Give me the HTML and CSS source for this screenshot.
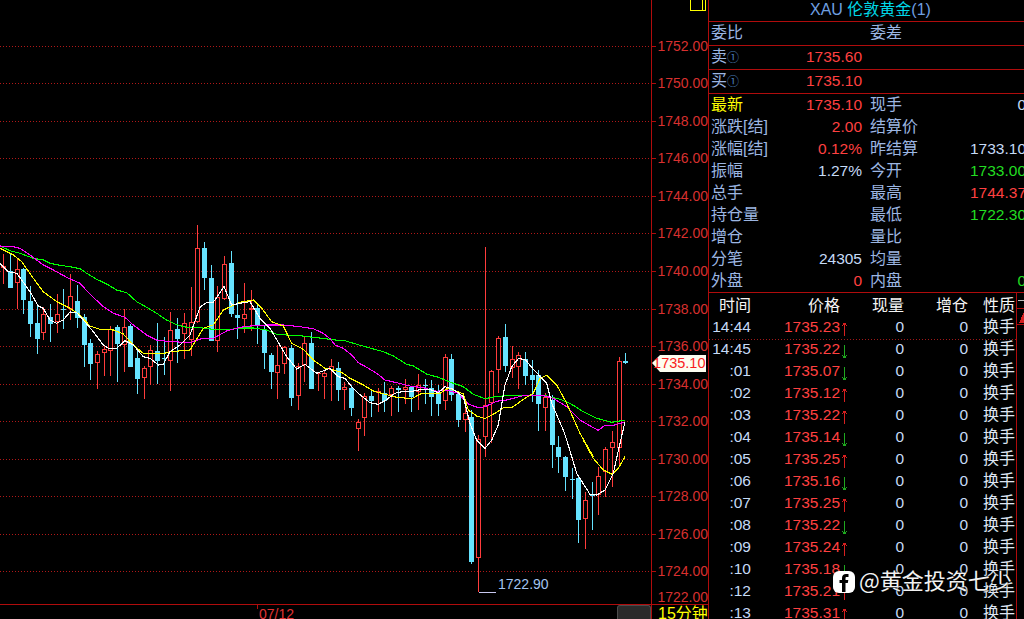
FILE: index.html
```html
<!DOCTYPE html>
<html lang="zh-CN">
<head>
    <meta charset="UTF-8">
    <title>XAU 伦敦黄金</title>
    <link rel="stylesheet" href="styles.css">
</head>
<body>
    <svg class="sprites" width="0" height="0">
        <symbol id="arrow-up" viewBox="0 0 7 13"><path d="M3.500 0V13M1 3L3.500 0L6 3"/></symbol>
        <symbol id="arrow-down" viewBox="0 0 7 13"><path d="M3.500 0V13M1 10L3.500 13L6 10"/></symbol>
    </svg>

    <div class="terminal">
        <div class="chart-column">
            <svg id="chart" class="chart" width="708" height="604"></svg>
            <div class="chart-footer">
                <div class="date-strip"><span class="date-label">07/12</span></div>
                <div class="scroll-thumb"></div>
                <div class="period">15分钟</div>
            </div>
        </div>

        <div class="side-panel">
            <div class="title-row">XAU <span class="title-name">伦敦黄金</span>(1)</div>
            <div class="book-row"><span class="label">委比</span><span></span><span class="label col-two">委差</span></div>
            <div class="book-row"><span class="label">卖<i class="level">①</i></span><span class="num up">1735.60</span></div>
            <div class="book-row"><span class="label">买<i class="level">①</i></span><span class="num up">1735.10</span></div>

            <div class="quote-grid">
                <span class="label latest">最新</span><span class="num up">1735.10</span><span class="label col-two">现手</span><span class="num">0</span>
                <span class="label">涨跌[结]</span><span class="num up">2.00</span><span class="label col-two">结算价</span><span class="num"></span>
                <span class="label">涨幅[结]</span><span class="num up">0.12%</span><span class="label col-two">昨结算</span><span class="num">1733.10</span>
                <span class="label">振幅</span><span class="num">1.27%</span><span class="label col-two">今开</span><span class="num down">1733.00</span>
                <span class="label">总手</span><span class="num"></span><span class="label col-two">最高</span><span class="num up">1744.37</span>
                <span class="label">持仓量</span><span class="num"></span><span class="label col-two">最低</span><span class="num down">1722.30</span>
                <span class="label">增仓</span><span class="num"></span><span class="label col-two">量比</span><span class="num"></span>
                <span class="label">分笔</span><span class="num">24305</span><span class="label col-two">均量</span><span class="num"></span>
                <span class="label">外盘</span><span class="num up">0</span><span class="label col-two">内盘</span><span class="num down">0</span>
            </div>

            <div class="trades">
                <div class="trade-list">
                    <div class="trade-row trade-head"><span>时间</span><span>价格</span><span></span><span>现量</span><span>增仓</span><span>性质</span></div>
                    <div class="trade-row split"><span>14:44</span><span class="up">1735.23</span><svg class="arrow rise"><use href="#arrow-up"/></svg><span>0</span><span>0</span><span class="kind">换手</span></div>
                    <div class="trade-row"><span>14:45</span><span class="up">1735.22</span><svg class="arrow fall"><use href="#arrow-down"/></svg><span>0</span><span>0</span><span class="kind">换手</span></div>
                    <div class="trade-row"><span>:01</span><span class="up">1735.07</span><svg class="arrow fall"><use href="#arrow-down"/></svg><span>0</span><span>0</span><span class="kind">换手</span></div>
                    <div class="trade-row"><span>:02</span><span class="up">1735.12</span><svg class="arrow rise"><use href="#arrow-up"/></svg><span>0</span><span>0</span><span class="kind">换手</span></div>
                    <div class="trade-row"><span>:03</span><span class="up">1735.22</span><svg class="arrow rise"><use href="#arrow-up"/></svg><span>0</span><span>0</span><span class="kind">换手</span></div>
                    <div class="trade-row"><span>:04</span><span class="up">1735.14</span><svg class="arrow fall"><use href="#arrow-down"/></svg><span>0</span><span>0</span><span class="kind">换手</span></div>
                    <div class="trade-row"><span>:05</span><span class="up">1735.25</span><svg class="arrow rise"><use href="#arrow-up"/></svg><span>0</span><span>0</span><span class="kind">换手</span></div>
                    <div class="trade-row"><span>:06</span><span class="up">1735.16</span><svg class="arrow fall"><use href="#arrow-down"/></svg><span>0</span><span>0</span><span class="kind">换手</span></div>
                    <div class="trade-row"><span>:07</span><span class="up">1735.25</span><svg class="arrow rise"><use href="#arrow-up"/></svg><span>0</span><span>0</span><span class="kind">换手</span></div>
                    <div class="trade-row"><span>:08</span><span class="up">1735.22</span><svg class="arrow fall"><use href="#arrow-down"/></svg><span>0</span><span>0</span><span class="kind">换手</span></div>
                    <div class="trade-row"><span>:09</span><span class="up">1735.24</span><svg class="arrow rise"><use href="#arrow-up"/></svg><span>0</span><span>0</span><span class="kind">换手</span></div>
                    <div class="trade-row"><span>:10</span><span class="up">1735.18</span><svg class="arrow fall"><use href="#arrow-down"/></svg><span>0</span><span>0</span><span class="kind">换手</span></div>
                    <div class="trade-row"><span>:12</span><span class="up">1735.21</span><svg class="arrow rise"><use href="#arrow-up"/></svg><span>0</span><span>0</span><span class="kind">换手</span></div>
                    <div class="trade-row"><span>:13</span><span class="up">1735.31</span><svg class="arrow rise"><use href="#arrow-up"/></svg><span>0</span><span>0</span><span class="kind">换手</span></div>
                </div>
                <div class="side-tabs">
                    <div class="tab-dash"></div>
                    <div class="tab-mark"></div>
                </div>
            </div>
        </div>

        <!-- watermark sits over the trade list -->
        <div class="watermark">
            <svg class="watermark-logo" width="22" height="22" viewBox="0 0 22 22">
                <rect width="22" height="22" rx="6" fill="#fff"/>
                <path d="M9 21V12H6.500V9H9V7C9 4.300 10.600 3 13 3H15.500V6H13.800C12.800 6 12.500 6.500 12.500 7.300V9H15.300L14.800 12H12.500V21Z" fill="#000"/>
            </svg>
            <span class="watermark-text">@黄金投资七少</span>
        </div>
    </div>

    <script src="chart.js"></script>
</body>
</html>
```

FILE: styles.css
```css
* {
    box-sizing: border-box;
}

html, body {
    margin: 0;
    height: 100%;
    background-color: #000;
    overflow: hidden;
}

body {
    font-family: "Liberation Sans", "Noto Sans CJK SC", sans-serif;
    font-size: 15.5px;
    color: #c6dbf7;
}

.sprites {
    display: block;
    height: 0;
}

.terminal {
    position: relative;
    display: flex;
    width: 1024px;
    height: 619px;
    overflow: hidden;
}

/* Chart side */
.chart-column {
    flex: 0 0 709px;
    display: flex;
    flex-direction: column;
    border-right: 1px solid #b00c0c;
}

.chart {
    display: block;
    flex: 0 0 604px;
}

.chart .grid { stroke: #b01818; stroke-width: 1; stroke-dasharray: 1 2; shape-rendering: crispEdges; }
.chart .frame { fill: #b00c0c; }
.chart .axis-text { fill: #d8302f; font-size: 14px; text-anchor: end; }
.chart .candle-up { fill: #ff3c3c; }
.chart .candle-down { fill: #66e3ff; }
.chart .hollow { fill: #000; }
.chart .ma { fill: none; stroke-width: 1.1; shape-rendering: crispEdges; }
.chart .ma-white { stroke: #fff; }
.chart .ma-yellow { stroke: #ff0; }
.chart .ma-magenta { stroke: #f0f; }
.chart .ma-green { stroke: #0f0; }
.chart .low-line { fill: #c8c8f0; }
.chart .low-text { fill: #a4c4f0; font-size: 14px; }
.chart .tag-bg { fill: #fdfdf0; }
.chart .tag-text { fill: #f81c1c; font-size: 14.5px; text-anchor: end; }
.chart .corner-box { fill: none; stroke: #ff0; stroke-width: 1; }

.chart-footer {
    flex: 1;
    display: flex;
    border-top: 1px solid #b00c0c;
    overflow: hidden;
}

.date-strip {
    flex: 0 0 617px;
    padding: 2px 0 0 259px;
    background: linear-gradient(#b00c0c, #b00c0c) no-repeat 257px 0 / 1px 4px;
}

.date-label {
    display: block;
    color: #e03434;
    font-size: 14px;
    line-height: 14px;
}

.scroll-thumb {
    flex: 0 0 34px;
    background-color: #2a2a2a;
    border: 1px solid #4c4c4c;
    border-bottom: none;
    border-radius: 3px 3px 0 0;
}

.period {
    flex: 1;
    padding: 1px 0 0 6px;
    border-left: 1px solid #b00c0c;
    color: #ff0;
    font-size: 16px;
    line-height: 16px;
    white-space: nowrap;
}

/* Quote panel */
.side-panel {
    flex: 1;
    min-width: 0;
    display: flex;
    flex-direction: column;
    overflow: hidden;
}

.title-row {
    flex: 0 0 22px;
    border-bottom: 1px solid #b00c0c;
    padding-left: 101px;
    color: #6f9fe0;
    font-size: 16px;
    line-height: 19px;
    white-space: nowrap;
}

.title-name {
    color: #00d8e8;
}

.book-row {
    flex: 0 0 24px;
    display: grid;
    grid-template-columns: 60px 91px 68px;
    padding-left: 2px;
    border-bottom: 1px solid #b00c0c;
    line-height: 22px;
}

.label {
    color: #9cb6e2;
    font-size: 16px;
    white-space: nowrap;
}

.latest {
    color: #ff0;
}

.col-two {
    padding-left: 8px;
}

.level {
    color: #4a7db8;
    font-size: 12px;
    font-style: normal;
}

.num {
    text-align: right;
    white-space: nowrap;
}

.up { color: #ff4040; }
.down { color: #22dd22; }

.quote-grid {
    flex: 0 0 199px;
    display: grid;
    grid-template-columns: 60px 91px 68px 96px;
    grid-auto-rows: 22px;
    width: 317px;
    padding-left: 2px;
    border-bottom: 1px solid #b00c0c;
    line-height: 21px;
}

/* Trade list */
.trades {
    flex: 1;
    display: flex;
    min-height: 0;
}

.trade-list {
    flex: 0 0 308px;
    padding-top: 1px;
    border-right: 1px solid #b00c0c;
}

.trade-row {
    display: grid;
    grid-template-columns: 42px 89px 14px 50px 64px 47px;
    height: 22px;
    line-height: 21px;
    text-align: right;
    white-space: nowrap;
}

.trade-head {
    color: #f4f4f4;
    font-size: 16px;
    line-height: 23px;
}

.trade-row.split {
    position: relative;
}

.trade-row.split::after {
    content: "";
    position: absolute;
    left: 0;
    right: 0;
    top: 23px;
    height: 1px;
    background-image: repeating-linear-gradient(90deg, #a01818 0 1px, transparent 1px 3px);
}

.kind {
    color: #dfe6f2;
    font-size: 16px;
}

.arrow {
    width: 7px;
    height: 13px;
    margin: 7px 0 0 1px;
    fill: none;
    stroke: currentColor;
    shape-rendering: crispEdges;
}

.rise { color: #d82020; }
.fall { color: #1fa81f; }

.side-tabs {
    flex: 1;
}

.tab-dash {
    height: 16px;
    border-bottom: 1px solid #b00c0c;
    background: linear-gradient(#bbb, #bbb) no-repeat 1px 7px / 6px 1px;
}

.tab-mark {
    height: 16px;
    border-bottom: 1px solid #b00c0c;
    background: linear-gradient(to bottom right, transparent 49%, #d42020 50%) no-repeat 2px 3px / 5px 11px;
}

/* Watermark */
.watermark {
    position: absolute;
    left: 833px;
    top: 567px;
    display: flex;
    align-items: center;
    gap: 4px;
    color: #f2f2f2;
    font-family: "Noto Sans CJK SC", sans-serif;
    font-size: 22px;
    line-height: 24px;
    text-shadow: 0 0 2px #000;
    white-space: nowrap;
}

.watermark-logo {
    flex: none;
}

.watermark-text {
    margin-bottom: 5px;
}
```

FILE: chart.js
```js
// Draws the candles, moving averages and price axis into the svg
const svg = document.getElementById('chart');
const NS = 'http://www.w3.org/2000/svg';

function add(tag, attrs, text) {
    const el = document.createElementNS(NS, tag);
    for (const key in attrs) {
        el.setAttribute(key, attrs[key]);
    }
    if (text) el.textContent = text;
    svg.appendChild(el);
    return el;
}

function box(x, y, w, h, cls) {
    add('rect', { x: x, y: y, width: w, height: h, class: cls, 'shape-rendering': 'crispEdges' });
}

// [wickTop, bodyTop, bodyBottom, wickBottom, isUp]
const U = 1, D = 0;
const candles = [
    [103,138,143,192,U],[100,153,203,205,D],[118,148,190,268,U],[145,148,240,282,D],[198,243,312,352,D],
    [258,309,357,402,D],[262,283,340,360,U],[252,291,312,366,D],[222,283,307,340,U],[207,267,270,327,D],
    [163,229,268,300,U],[195,243,294,324,D],[282,291,375,441,D],[357,369,432,480,D],[393,403,429,507,U],
    [375,388,400,468,U],[318,327,392,468,U],[315,321,372,486,D],[267,321,375,456,U],[312,318,441,441,D],
    [390,414,477,522,D],[438,444,473,537,U],[375,391,440,495,U],[309,393,423,492,D],[351,414,417,465,D],
    [276,330,422,513,U],[294,327,358,429,D],[279,310,341,417,U],[201,307,360,408,U],[15,85,307,308,U],
    [66,84,174,210,D],[135,174,362,363,D],[198,231,362,396,U],[108,133,236,240,U],[93,129,282,291,D],
    [222,285,294,357,D],[189,283,296,339,U],[210,265,270,333,U],[255,264,318,372,D],[315,330,399,447,D],
    [399,405,456,507,D],[375,436,458,537,U],[378,381,431,462,U],[375,384,534,558,D],[429,439,527,570,U],
    [351,370,436,486,U],[336,369,507,507,D],[456,458,461,513,U],[450,460,472,537,U]
].map(c => [220 + c[0] / 3, 220 + c[1] / 3, 220 + c[2] / 3, 220 + c[3] / 3, c[4]]).concat([
    [387,408,420,513,U],[396,414,480,513,D],[456,471,479,540,U],[465,474,534,558,D],[567,576,596,663,U],
    [489,499,563,618,U],[480,498,513,561,D],[474,484,490,546,U],[456,489,513,546,D],[468,475,495,558,U],
    [468,474,480,546,D],[447,471,480,522,U],[468,471,501,546,D],[432,466,486,540,U],[447,465,468,522,D],
    [450,474,501,558,D],[465,486,522,558,D],[372,382,513,540,U],[372,387,495,513,D],[489,492,570,591,D],
    [510,550,570,606,U]
].map(c => [230 + c[0] / 3, 230 + c[1] / 3, 230 + c[2] / 3, 230 + c[3] / 3, c[4]])).concat([
    [410,417,562,564,D],[435,439,558,592,U],[247,405,437,457,U],[370,371,403,443,U],[336,338,370,393,U],
    [324,337,366,372,D],[346,359,368,378,U],[352,355,367,389,U],[352,359,376,385,D],[360,375,380,402,D],
    [370,375,404,431,D],[393,397,408,431,U],[395,400,445,468,D],[436,447,457,473,D],[456,457,477,491,D],
    [468,479,480,499,D],[476,478,520,543,D],[492,500,519,549,U],[482,495,496,530,D],[467,476,495,515,U],
    [447,449,472,497,U],[431,442,448,487,U],[357,361,448,467,U],[353,361,363,364,D]
]);

// moving averages, traced in 3x crop units and scaled back
function crop(ox, oy, pts) {
    return pts.map(p => (ox + p[0] / 3).toFixed(1) + ',' + (oy + p[1] / 3).toFixed(1));
}

const averages = {
    green: crop(0, 220, [[0,78],[30,92],[60,100],[100,115],[130,120],[150,130],[180,136],[210,140],[240,146],[260,160],[290,178],[320,192],[350,210],[380,218],[410,245],[440,262],[470,280],[500,300],[530,314],[560,322],[600,323],[640,328],[680,330],[720,324],[760,324],[800,330],[830,343],[860,345],[900,347],[950,353],[990,358]])
        .concat(crop(330, 230, [[15,330],[45,332],[80,343],[120,354],[160,365],[190,378],[230,403],[250,408],[290,432],[325,442],[365,458],[400,470],[430,493],[465,506],[495,500],[540,496],[600,497],[650,498],[690,508],[720,520],[760,545],[800,565],[845,577],[885,570]])),
    magenta: crop(0, 220, [[0,78],[40,80],[60,85],[90,105],[130,135],[160,150],[200,172],[240,190],[260,212],[280,232],[310,260],[340,280],[375,292],[400,315],[440,345],[470,360],[500,364],[570,368],[600,357],[640,355],[680,333],[720,322],[760,317],[800,315],[850,315],[900,320],[940,326],[970,340],[990,356]])
        .concat(crop(330, 230, [[15,345],[40,355],[65,375],[85,398],[110,412],[140,430],[165,450],[200,458],[240,468],[280,473],[320,484],[350,480],[385,490],[415,522],[445,533],[465,530],[500,514],[530,510],[580,497],[640,497],[670,505],[710,530],[750,570],[790,593],[805,601],[825,586],[850,586],[885,576]])),
    yellow: crop(0, 220, [[0,85],[40,105],[65,125],[100,175],[130,215],[170,245],[210,265],[240,285],[270,318],[300,328],[340,330],[370,342],[400,375],[430,400],[490,401],[510,395],[570,390],[610,325],[640,315],[670,270],[720,247],[760,240],[785,265],[815,305],[850,318],[875,370],[910,388],[940,420],[975,445],[990,447]])
        .concat(crop(330, 230, [[35,427],[60,445],[100,465],[130,483],[170,494],[200,502],[245,506],[275,490],[330,490],[355,474],[400,492],[415,540],[440,558],[465,566],[495,550],[520,533],[545,533],[585,505],[610,490],[630,445],[650,436],[680,465],[710,520],[750,610],[790,680]]))
        .concat(crop(450, 440, [[400,0],[430,55],[460,90],[487,103],[505,85],[525,50]])),
    white: crop(0, 220, [[0,130],[25,155],[50,160],[65,180],[90,215],[115,258],[130,265],[150,300],[170,310],[190,300],[210,276],[230,278],[250,300],[280,335],[310,375],[325,385],[350,385],[375,362],[400,375],[430,410],[450,415],[475,435],[490,433],[510,395],[540,375],[570,345],[600,262],[620,247],[640,247],[672,200],[695,255],[720,250],[750,245],[780,295],[810,325],[860,410],[890,447],[915,433],[950,460],[990,445]])
        .concat(crop(330, 230, [[25,440],[45,445],[65,470],[85,490],[120,518],[145,523],[165,512],[195,490],[215,485],[240,485],[265,480],[300,478],[325,488],[345,470],[370,478],[400,500],[420,580],[440,630],[465,655],[485,630],[505,585],[525,465],[545,410],[565,386],[585,388],[610,418],[650,460],[665,520],[700,600]]))
        .concat(crop(450, 440, [[350,0],[380,100],[420,163],[440,165],[465,150],[490,100],[510,10]]))
        .concat(crop(330, 230, [[885,575]]))
};

// grid and axis labels, one line every 2.00
for (let i = 0; i < 15; i++) {
    const y = Math.round(45.7 + 37.55 * i);
    add('line', { x1: 0, x2: 650, y1: y + 0.5, y2: y + 0.5, class: 'grid' });
    box(652, y, 4, 1, 'frame');
    add('text', { x: 708, y: y + 5, class: 'axis-text' }, (1752 - i * 2) + '.00');
}
add('text', { x: 708, y: 602, class: 'axis-text' }, '1722.00');
box(651, 0, 1, 604, 'frame');

// candles
candles.forEach((c, i) => {
    const x = Math.round(3.3 + 6.6875 * i);
    const cls = c[4] ? 'candle-up' : 'candle-down';
    const top = Math.round(c[1]);
    const h = Math.max(Math.round(c[2]) - top, 1);
    box(x, Math.round(c[0]), 1, Math.round(c[3]) - Math.round(c[0]), cls);
    box(x - 2, top, 5, h, cls);
    if (c[4] && h > 2) box(x - 1, top + 1, 3, h - 2, 'hollow');
});

for (const name in averages) {
    add('polyline', { points: averages[name].join(' '), class: 'ma ma-' + name });
}

// lowest price marker
box(479, 592, 17, 1, 'low-line');
add('text', { x: 498, y: 589, class: 'low-text' }, '1722.90');

// current price tag
add('polygon', { points: '652,363 660,355 706,355 706,372 660,372', class: 'tag-bg' });
add('text', { x: 705.5, y: 368, class: 'tag-text' }, '1735.10');

// box in the top corner of the axis
add('rect', { x: 690.5, y: -1, width: 15, height: 11.5, class: 'corner-box', 'shape-rendering': 'crispEdges' });
add('line', { x1: 702.5, x2: 702.5, y1: 0, y2: 10, class: 'corner-box', 'shape-rendering': 'crispEdges' });
```
